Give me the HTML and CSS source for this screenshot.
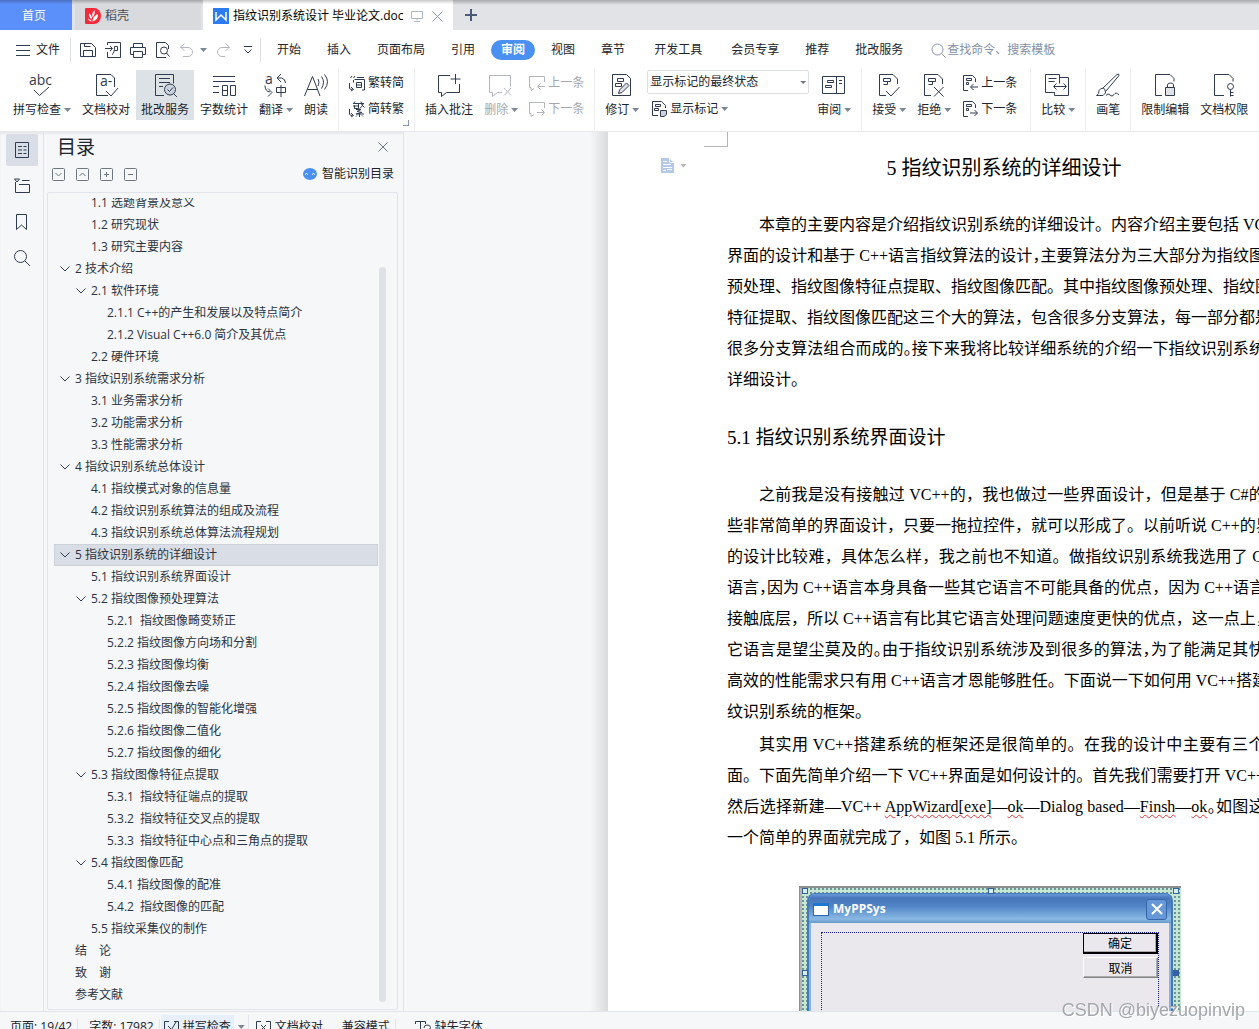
FILE: index.html
```html
<!DOCTYPE html>
<html lang="zh-CN">
<head>
<meta charset="utf-8">
<title>指纹识别系统设计 毕业论文.doc</title>
<link rel="stylesheet" href="styles.css">
</head>
<body>
<svg class="defs" width="0" height="0" aria-hidden="true">
  <symbol id="chev" viewBox="0 0 10 10"><path d="M.5 2.500L5 7l4.500-4.500"/></symbol>
  <symbol id="markdoc" viewBox="0 0 24 24"><path d="M10 22.500H3.500v-21H17l4.500 4.500v5M7.500 5.500h7v3h-7zM7.500 11.500h4v-3"/></symbol>
</svg>

<header class="tabs">
  <a class="tab home" href="#">首页</a>
  <a class="tab shell" href="#">
    <svg width="16" height="16" viewBox="0 0 16 16"><path fill="#f5293a" d="M1 0h8a7 8 0 0 1 0 16H1a1 1 0 0 1-1-1V1a1 1 0 0 1 1-1z"/><path fill="#fff" d="M9.500 2c.8 3-.2 5-1.800 7.600C6.500 7 7.500 4 9.500 2zM4 5c2 1.500 3 3.500 3 6.500C4.500 10 3.500 8 4 5zM13 6c.3 3.500-1.500 6.500-5.500 7.500C7.500 10 10 7 13 6zM3 10.500c1.500.5 3 1.500 3.800 3-2 0-3.300-1-3.800-3z"/></svg>
    <span>稻壳</span></a>
  <a class="tab doc" href="#">
    <svg width="16" height="16" viewBox="0 0 16 16"><path fill="#2d7bf0" d="M0 0h16v16H0z"/><path fill="none" stroke="#fff" stroke-width="1.500" d="M3 4v8l5-5 5 5V4"/></svg>
    <span>指纹识别系统设计 毕业论文.doc</span>
    <svg class="pale" width="12" height="12" viewBox="0 0 12 12"><path d="M.5 1.500h11v7H.5zM6 8.500v2M3 11.500h6"/></svg>
    <svg class="slate" width="11" height="11" viewBox="0 0 11 11"><path d="M.5.500l10 10M10.500.500l-10 10"/></svg>
  </a>
  <button class="newtab" aria-label="新建"><svg width="12" height="12" viewBox="0 0 12 12"><path d="M6 0v12M0 6h12"/></svg></button>
</header>

<nav class="menu">
  <button class="file"><svg width="14" height="11" viewBox="0 0 14 11"><path d="M0 .5h14M0 5.500h14M0 10.500h14"/></svg>文件</button>
  <div class="quick">
    <button aria-label="保存"><svg width="16" height="16" viewBox="0 0 16 16"><path d="M.5 1.500h11l4 4v9h-15zM3.500 14.500v-6h9v6M4.500 1.500v3h6"/></svg></button>
    <button aria-label="输出为PDF"><svg width="16" height="16" viewBox="0 0 16 16"><path d="M2.500 3V.5h13v15h-13V10M0 6.500h7M5 4l2.500 2.500L5 9M7 12.500c2-1 2.500-4 2.500-8h3v4h-3"/></svg></button>
    <button aria-label="打印"><svg width="16" height="16" viewBox="0 0 16 16"><path d="M3.500 5.500v-4h9v4M3.500 12.500h-3v-7h15v7h-3M3.500 9.500h9v6h-9z"/></svg></button>
    <button aria-label="打印预览"><svg width="16" height="16" viewBox="0 0 16 16"><path d="M11 15.500H1.500V.5h9l3 3V7"/><circle cx="9" cy="8.500" r="3.500"/><path d="M11.500 11l3 3.500"/></svg></button>
    <button class="off" aria-label="撤销"><svg width="14" height="14" viewBox="0 0 14 14"><path d="M4.500.5l-4 3.500 4 4M.5 4.500H8a4.500 4.500 0 0 1 0 9H3"/></svg><i class="dd"></i></button>
    <button class="off" aria-label="恢复"><svg width="14" height="14" viewBox="0 0 14 14"><path d="M9.500.5l4 3.500-4 4M13.500 4.500H6a4.500 4.500 0 0 0 0 9h3"/></svg></button>
    <button aria-label="自定义"><svg width="8" height="8" viewBox="0 0 8 8"><path d="M0 .5h8M.5 3.500L4 7l3.500-3.500"/></svg></button>
  </div>
  <div class="menus">
    <a href="#">开始</a><a href="#">插入</a><a href="#">页面布局</a><a href="#">引用</a><a class="on" href="#">审阅</a><a href="#">视图</a><a href="#">章节</a><a class="far" href="#">开发工具</a><a class="far" href="#">会员专享</a><a href="#">推荐</a><a href="#">批改服务</a>
  </div>
  <label class="find"><svg width="15" height="15" viewBox="0 0 15 15"><circle cx="6.500" cy="6.500" r="5.500"/><path d="M10.500 10.500l4 4"/></svg><input type="text" placeholder="查找命令、搜索模板" aria-label="查找命令"></label>
</nav>

<section class="ribbon">
  <div class="group">
    <button class="big"><svg width="24" height="24" viewBox="0 0 24 24"><text x="0" y="12" class="glyph">abc</text><path d="M5 17l5.500 5.500L20 14"/></svg><span>拼写检查<i class="dd"></i></span></button>
    <button class="big"><svg width="24" height="24" viewBox="0 0 24 24"><path d="M14 22.500H2.500v-21H17l3.500 3.500v9M12 18l5 5 7-8"/><text x="6" y="13" class="glyph">a-</text></svg><span>文档校对</span></button>
    <button class="big picked"><svg width="24" height="24" viewBox="0 0 24 24"><path d="M11 22.500H2.500v-21h18v9M6 5.500h11M6 9.500h11M6 13.500h4"/><circle cx="17" cy="16.500" r="5.500" fill="#c9d2dd"/><path d="M14.500 16.500l2 2 3.500-4M20.500 20.500L24 24"/></svg><span>批改服务</span></button>
    <button class="big"><svg width="24" height="24" viewBox="0 0 24 24"><path d="M1 3.500h22M1 8.500h22M1 13.500h6M1 19.500h6M10.500 12.500h5v10h-5zM10.500 17.500h5M18.500 12.500h5v10h-5z"/></svg><span>字数统计</span></button>
    <button class="big"><svg width="24" height="24" viewBox="0 0 24 24"><text x="2" y="11" class="glyph">a</text><path d="M18 1l-4 4 4 4M14 5h4.500q4 1 4 5M2 12.500q0 6 5 6.500M5 15.500l4 4-4 4M13.500 14.500h9v5h-9zM18 12v12"/></svg><span>翻译<i class="dd"></i></span></button>
    <button class="big"><svg width="24" height="24" viewBox="0 0 24 24"><path d="M.5 23L8.500 3.500 16 23M3.500 16.500h10M14 6q2 3 0 7M17.500 3.500q4 5.500 0 12M20.500 1.500q6 7 0 15"/></svg><span>朗读</span></button>
  </div>
  <div class="group corner">
    <div class="stack">
      <button><svg width="16" height="16" viewBox="0 0 16 16"><path d="M3 1L1.500 3M6 1L4.500 3M8 2.500h7M4.500 5v2.500M5.500 4.500h10v10.500H13M.5 8v5q0 1.500 3 1.500M2 12l2.500 2.500L2 16M7.500 7.500h5v5h-5zM7.500 10h5"/></svg>繁转简</button>
      <button><svg width="16" height="16" viewBox="0 0 16 16"><path d="M6 .5L4 3M5 2.500h10M5.500 4.500v3h4v-5M4 5h6M12 .5q0 4 3.500 6M14.500 2q-1 4-4 5.500M7 8.500h5l-4 2 5 1-6 1.500h8M10.500 12v4M7 15.500l1-1M14 15.500l-1-1M.5 8v5q0 1.500 3 1.500M2 12l2.500 2.500L2 16"/></svg>简转繁</button>
    </div>
  </div>
  <div class="group">
    <button class="big"><svg width="24" height="24" viewBox="0 0 24 24"><path d="M13 2.500H1.500v17h3v4l5-4h13V11M18.500 1v10M13.500 6h10"/></svg><span>插入批注</span></button>
    <button class="big off"><svg width="24" height="24" viewBox="0 0 24 24"><path d="M14 19.500H9.500l-5 4v-4h-3v-17h21v11M16 15l7 7.500M23 15l-7 7.500"/></svg><span>删除<i class="dd"></i></span></button>
    <div class="stack off">
      <button disabled><svg width="16" height="16" viewBox="0 0 16 16"><path d="M5 13.500l-3 2v-3H.5v-11h15V7M16 11.500H9M11.500 8.500l-3 3 3 3"/></svg>上一条</button>
      <button disabled><svg width="16" height="16" viewBox="0 0 16 16"><path d="M5 13.500l-3 2v-3H.5v-11h15V7M8 11.500h7M12.500 8.500l3 3-3 3"/></svg>下一条</button>
    </div>
  </div>
  <div class="group">
    <button class="big"><svg width="24" height="24" viewBox="0 0 24 24"><path d="M3.500 1.500h14l4 4v17h-18zM8.500 5.500h6v3h-6zM6.500 10.500h6v3h-6z"/><path fill="#dfe3e8" d="M9.500 20.500l1-3.500 7-7 2.500 2.500-7 7z"/></svg><span>修订<i class="dd"></i></span></button>
    <div class="stack view">
      <span class="pick"><select aria-label="显示标记"><option>显示标记的最终状态</option></select></span>
      <button><svg width="16" height="16" viewBox="0 0 16 16"><path d="M7 14.500H1.500V.5h9l4 4V7M4.500 3.500h5v2h-5zM3.500 7.500h4v2h-4z"/><path fill="#c9d2dd" d="M9.500 9.500h6v4l-2.500 2h-3.500z"/></svg>显示标记<i class="dd"></i></button>
    </div>
    <button class="big"><svg width="24" height="24" viewBox="0 0 24 24"><path d="M1.500 3.500h22v17h-22zM15.500 3.500v17M6.500 7.500h6v2h-6zM4.500 12.500h6v2h-6zM18 7.500h3M18 10.500h3"/></svg><span>审阅<i class="dd"></i></span></button>
  </div>
  <div class="group changes">
    <button class="big"><svg width="24" height="24" viewBox="0 0 24 24"><use href="#markdoc"/><path d="M10 18l5 5 8.500-9"/></svg><span>接受<i class="dd"></i></span></button>
    <button class="big"><svg width="24" height="24" viewBox="0 0 24 24"><use href="#markdoc"/><path d="M13 14l9.500 9.500M22.500 14L13 23.500"/></svg><span>拒绝<i class="dd"></i></span></button>
    <div class="stack">
      <button><svg width="16" height="16" viewBox="0 0 16 16"><path d="M6 15.500H1.500V.5h9l3 3V7M4.500 3.500h5v2h-5zM4.500 9.500h2v-2h-2zM16 12H9M11.500 9l-3 3 3 3"/></svg>上一条</button>
      <button><svg width="16" height="16" viewBox="0 0 16 16"><path d="M6 15.500H1.500V.5h9l3 3V7M4.500 3.500h5v2h-5zM4.500 9.500h2v-2h-2zM8 12h7M12.500 9l3 3-3 3"/></svg>下一条</button>
    </div>
  </div>
  <div class="group">
    <button class="big"><svg width="24" height="24" viewBox="0 0 24 24"><path d="M9.500 19.500h-9v-18h14v9M3.500 5.500h8M3.500 8.500h6M14.500 4.500h9v18h-14v-3M9 13.500h12M11.500 10.500l-3 3 3 3M18.500 10.500l3 3-3 3"/></svg><span>比较<i class="dd"></i></span></button>
  </div>
  <div class="group">
    <button class="big"><svg width="24" height="24" viewBox="0 0 24 24"><path d="M.5 22.500q3-2 2.500-5 3-4 6-1 2 4-2 6zM7 15L21 1.500q2-1.500 2 1L10 18M10 22.500q2-3 4-.5t4-.5 5 .5"/></svg><span>画笔</span></button>
  </div>
  <div class="group">
    <button class="big"><svg width="24" height="24" viewBox="0 0 24 24"><path d="M9 22.500H2.500v-21H17l4 4v3"/><path d="M14.500 15v-3q0-2 3-2t3 2v3"/><path fill="#dfe3e8" d="M12.500 14.500h9v8h-9z"/></svg><span>限制编辑</span></button>
    <button class="big"><svg width="24" height="24" viewBox="0 0 24 24"><path d="M12 22.500H2.500v-21H17l4 4v3"/><circle cx="18.500" cy="13.500" r="3"/><path d="M18.500 16.500v7M18.500 19.500h3M18.500 22.500h3"/></svg><span>文档权限</span></button>
  </div>
</section>

<main class="work">
  <aside class="rail">
    <button class="on" aria-label="目录"><svg width="16" height="16" viewBox="0 0 16 16"><path d="M1.500.5h13v15h-13zM4 4.500h4M9.500 4.500h3M4 8h4M9.500 8h3M4 11.500h4M9.500 11.500h3"/></svg></button>
    <button aria-label="章节"><svg width="16" height="16" viewBox="0 0 16 16"><path d="M.5 1h5L3 4zM8 2.500h7.500M1.500 4v10.500h14v-8H5"/></svg></button>
    <button aria-label="书签"><svg width="16" height="16" viewBox="0 0 16 16"><path d="M2.500.5h10v15l-5-4.500-5 4.500z"/></svg></button>
    <button aria-label="查找"><svg width="16" height="16" viewBox="0 0 16 16"><circle cx="6.500" cy="6.500" r="6"/><path d="M11 11l5 5"/></svg></button>
  </aside>

  <section class="outline">
    <div class="head"><h2>目录</h2><button aria-label="关闭"><svg width="10" height="10" viewBox="0 0 10 10"><path d="M.5.500l9 9M9.500.500l-9 9"/></svg></button></div>
    <div class="tools">
      <button aria-label="展开"><svg width="13" height="13" viewBox="0 0 13 13"><rect x=".5" y=".5" width="12" height="12" rx="1"/><path d="M3.500 5l3 3 3-3"/></svg></button>
      <button aria-label="收起"><svg width="13" height="13" viewBox="0 0 13 13"><rect x=".5" y=".5" width="12" height="12" rx="1"/><path d="M3.500 8l3-3 3 3"/></svg></button>
      <button aria-label="增加"><svg width="13" height="13" viewBox="0 0 13 13"><rect x=".5" y=".5" width="12" height="12" rx="1"/><path d="M6.500 4v5M4 6.500h5"/></svg></button>
      <button aria-label="减少"><svg width="13" height="13" viewBox="0 0 13 13"><rect x=".5" y=".5" width="12" height="12" rx="1"/><path d="M4 6.500h5"/></svg></button>
      <a class="smart" href="#"><svg width="14" height="12" viewBox="0 0 14 12"><ellipse cx="7" cy="6" rx="7" ry="6" fill="#4a90f2" stroke="none"/><path stroke="#fff" d="M2 6.500q1.500-2 3 0M9 6.500q1.500-2 3 0"/></svg>智能识别目录</a>
    </div>
    <div class="box">
      <div class="scroll">
        <ul class="toc">
          <li class="l2"><a href="#">1.1 选题背景及意义</a></li>
          <li class="l2"><a href="#">1.2 研究现状</a></li>
          <li class="l2"><a href="#">1.3 研究主要内容</a></li>
          <li class="l1"><svg><use href="#chev"/></svg><a href="#">2 技术介绍</a></li>
          <li class="l2"><svg><use href="#chev"/></svg><a href="#">2.1 软件环境</a></li>
          <li class="l3"><a href="#">2.1.1 C++的产生和发展以及特点简介</a></li>
          <li class="l3"><a href="#">2.1.2 Visual C++6.0 简介及其优点</a></li>
          <li class="l2"><a href="#">2.2 硬件环境</a></li>
          <li class="l1"><svg><use href="#chev"/></svg><a href="#">3 指纹识别系统需求分析</a></li>
          <li class="l2"><a href="#">3.1 业务需求分析</a></li>
          <li class="l2"><a href="#">3.2 功能需求分析</a></li>
          <li class="l2"><a href="#">3.3 性能需求分析</a></li>
          <li class="l1"><svg><use href="#chev"/></svg><a href="#">4 指纹识别系统总体设计</a></li>
          <li class="l2"><a href="#">4.1 指纹模式对象的信息量</a></li>
          <li class="l2"><a href="#">4.2 指纹识别系统算法的组成及流程</a></li>
          <li class="l2"><a href="#">4.3 指纹识别系统总体算法流程规划</a></li>
          <li class="l1 sel"><svg><use href="#chev"/></svg><a href="#">5 指纹识别系统的详细设计</a></li>
          <li class="l2"><a href="#">5.1 指纹识别系统界面设计</a></li>
          <li class="l2"><svg><use href="#chev"/></svg><a href="#">5.2 指纹图像预处理算法</a></li>
          <li class="l3"><a href="#">5.2.1&nbsp; 指纹图像畸变矫正</a></li>
          <li class="l3"><a href="#">5.2.2 指纹图像方向场和分割</a></li>
          <li class="l3"><a href="#">5.2.3 指纹图像均衡</a></li>
          <li class="l3"><a href="#">5.2.4 指纹图像去噪</a></li>
          <li class="l3"><a href="#">5.2.5 指纹图像的智能化增强</a></li>
          <li class="l3"><a href="#">5.2.6 指纹图像二值化</a></li>
          <li class="l3"><a href="#">5.2.7 指纹图像的细化</a></li>
          <li class="l2"><svg><use href="#chev"/></svg><a href="#">5.3 指纹图像特征点提取</a></li>
          <li class="l3"><a href="#">5.3.1&nbsp; 指纹特征端点的提取</a></li>
          <li class="l3"><a href="#">5.3.2&nbsp; 指纹特征交叉点的提取</a></li>
          <li class="l3"><a href="#">5.3.3&nbsp; 指纹特征中心点和三角点的提取</a></li>
          <li class="l2"><svg><use href="#chev"/></svg><a href="#">5.4 指纹图像匹配</a></li>
          <li class="l3"><a href="#">5.4.1 指纹图像的配准</a></li>
          <li class="l3"><a href="#">5.4.2&nbsp; 指纹图像的匹配</a></li>
          <li class="l2"><a href="#">5.5 指纹采集仪的制作</a></li>
          <li class="l1"><a href="#">结　论</a></li>
          <li class="l1"><a href="#">致　谢</a></li>
          <li class="l1"><a href="#">参考文献</a></li>
        </ul>
      </div>
      <div class="bar"></div>
    </div>
  </section>

  <section class="canvas">
    <div class="edge"></div>
    <article class="page">
      <div class="crop"></div>
      <div class="pastetip"><svg width="13" height="15" viewBox="0 0 13 15"><path fill="#b4c8e8" d="M0 0h8l5 5v10H0z"/><path stroke="#fff" d="M8.500 0v4.500H13M2 3.500h4M2 6.500h8M2 9.500h9M2 12.500h3M6 11.500h5"/></svg><i class="dd"></i></div>
      <div class="text">
        <h1>5 指纹识别系统的详细设计</h1>
        <p>
          <span class="ln in">本章的主要内容是介绍指纹识别系统的详细设计。内容介绍主要包括 VC++</span>
          <span class="ln">界面的设计和基于 C++语言指纹算法的设计<b>，</b>主要算法分为三大部分为指纹图像</span>
          <span class="ln">预处理、指纹图像特征点提取、指纹图像匹配。其中指纹图像预处理、指纹图像</span>
          <span class="ln">特征提取、指纹图像匹配这三个大的算法，包含很多分支算法，每一部分都是由</span>
          <span class="ln">很多分支算法组合而成的<b>。</b>接下来我将比较详细系统的介绍一下指纹识别系统的</span>
          <span class="ln end">详细设计。</span>
        </p>
        <h2>5.1 指纹识别系统界面设计</h2>
        <p>
          <span class="ln in">之前我是没有接触过 VC++的，我也做过一些界面设计，但是基于 C#的一</span>
          <span class="ln">些非常简单的界面设计，只要一拖拉控件，就可以形成了。以前听说 C++的界面</span>
          <span class="ln">的设计比较难，具体怎么样，我之前也不知道。做指纹识别系统我选用了 C++</span>
          <span class="ln">语言<b>，</b>因为 C++语言本身具备一些其它语言不可能具备的优点，因为 C++语言能</span>
          <span class="ln">接触底层，所以 C++语言有比其它语言处理问题速度更快的优点，这一点上，其</span>
          <span class="ln">它语言是望尘莫及的<b>。</b>由于指纹识别系统涉及到很多的算法<b>，</b>为了能满足其快速</span>
          <span class="ln">高效的性能需求只有用 C++语言才恩能够胜任。下面说一下如何用 VC++搭建指</span>
          <span class="ln end">纹识别系统的框架。</span>
        </p>
        <p>
          <span class="ln in">其实用 VC++搭建系统的框架还是很简单的。在我的设计中主要有三个界</span>
          <span class="ln">面。下面先简单介绍一下 VC++界面是如何设计的。首先我们需要打开 VC++，</span>
          <span class="ln">然后选择新建—VC++ <u>AppWizard[exe]</u>—<u>ok</u>—Dialog based—<u>Finsh</u>—<u>ok</u><b>。</b>如图这样</span>
          <span class="ln end">一个简单的界面就完成了，如图 5.1 所示。</span>
        </p>
        <figure>
          <div class="dots">
            <i class="h tl"></i><i class="h tc"></i><i class="h tr"></i><i class="h ml"></i><i class="h mr"></i>
            <div class="win">
              <div class="cap"><span class="ico"></span><span class="name">MyPPSys</span><button aria-label="关闭窗口"><svg width="12" height="12" viewBox="0 0 12 12"><path d="M1 1l10 10M11 1L1 11"/></svg></button></div>
              <div class="client"><div class="grid"><button class="ok">确定</button><button>取消</button></div></div>
            </div>
          </div>
        </figure>
      </div>
    </article>
  </section>
</main>

<footer class="status">
  <div class="in">
    <span class="cell first">页面: 19/42</span>
    <span class="cell">字数: 17982</span>
    <button class="spell"><svg width="15" height="15" viewBox="0 0 15 15"><path d="M5 1.500H.5v12h14v-12H10M4 6l3.500 3.500L12 2"/></svg>拼写检查</button><i class="dd"></i>
    <button class="proof"><svg width="15" height="15" viewBox="0 0 15 15"><path d="M5 1.500H.5v12h14v-12H10M5 5l5 5M10 5l-5 5"/></svg>文档校对</button>
    <span class="mode">兼容模式</span>
    <button class="miss"><svg width="16" height="15" viewBox="0 0 16 15"><path d="M.5 4V1.500h10V4M5.500 1.500v12M9 8q0-3 3-3 3.500 0 3.500 2.500 0 2-3 3v2M12.500 14v1"/></svg>缺失字体</button>
  </div>
</footer>
<div class="mark">CSDN @biyezuopinvip</div>
</body>
</html>
```
FILE: styles.css
```css
* { box-sizing: border-box; }
html, body { height: 100%; }
body {
  margin: 0;
  display: flex;
  flex-direction: column;
  overflow: hidden;
  background: #fff;
  color: #20242c;
  font: 12px/16px "Open Sans", "Noto Sans CJK SC", sans-serif;
}
a { color: inherit; text-decoration: none; }
button { margin: 0; padding: 0; border: 0; background: none; color: inherit; font: inherit; }
svg { flex: none; fill: none; stroke: #2f3b4e; overflow: visible; }
.defs { position: absolute; }
.glyph { fill: #2f3b4e; stroke: none; font-size: 14px; }
.dd {
  flex: none;
  width: 7px;
  height: 4px;
  background: #7c8798;
  clip-path: polygon(0 0, 100% 0, 50% 100%);
}
.off { color: #a3a8b0; }
.off svg { stroke: #b3b7bd; }

/* Window tabs */
.tabs {
  flex: none;
  display: flex;
  height: 30px;
  background: linear-gradient(#a9aaad, #e1e3e7 5px);
}
.tab { display: flex; align-items: center; padding-top: 2px; }
.home { width: 72px; justify-content: center; padding-right: 4px; background: linear-gradient(#4c6fc0, #5b8ff9 4px); color: #fff; }
.shell { width: 126px; margin-left: 3px; padding-left: 10px; gap: 4px; background: linear-gradient(#a2a3a6, #d8dade 4px); color: #4a4f58; }
.shell svg, .doc svg:first-child { stroke: none; }
.doc { width: 250px; margin-left: 2px; padding-left: 10px; gap: 4px; background: linear-gradient(#c8c8c8, #fff 4px); color: #000; white-space: nowrap; }
.doc .pale { stroke: #b0b8c6; margin-left: 3px; }
.doc .slate { stroke: #8b96ac; margin-left: 5px; }
.newtab { width: 36px; display: flex; align-items: center; justify-content: center; }
.newtab svg { stroke: #4b5a78; stroke-width: 2; }

/* Menu row */
.menu { flex: none; display: flex; align-items: center; height: 38px; padding: 2px 0 0 16px; white-space: nowrap; }
.file { display: flex; align-items: center; gap: 6px; padding-right: 10px; }
.quick { display: flex; align-items: center; gap: 9px; height: 24px; padding: 0 8px 0 9px; border-left: 1px solid #dcdfe4; border-right: 1px solid #dcdfe4; }
.quick button { display: flex; align-items: center; gap: 6px; }
.quick button:last-child { padding-left: 5px; }
.menus { display: flex; gap: 6px; padding-left: 6px; }
.menus a { height: 20px; padding: 2px 10px; border-radius: 10px; }
.menus .far { margin-left: 3px; }
.menus .on { background: #4a90f2; color: #fff; font-weight: bold; }
.find { display: flex; align-items: center; gap: 1px; margin-left: 18px; }
.find svg { stroke: #8b96ac; }
.find input { width: 130px; padding: 0; border: 0; outline: 0; font: inherit; }
.find input::placeholder { color: #8590a5; opacity: 1; }

/* Ribbon */
.ribbon {
  flex: none;
  display: flex;
  height: 64px;
  padding-left: 3px;
  overflow: hidden;
  border-bottom: 1px solid #e6e8eb;
  white-space: nowrap;
}
.group { flex: none; display: flex; align-items: flex-start; gap: 1px; height: 62px; padding: 2px 5px 0; border-right: 1px solid #eceef0; }
.group:last-child { border-right: 0; }
.changes { padding-right: 8px; }
.big { display: flex; flex-direction: column; align-items: center; gap: 5px; height: 50px; padding: 3px 5px 0; }
.big > span { display: flex; align-items: center; gap: 3px; }
.big:has(.dd) svg { margin-right: 2px; }
.picked { background: #dde2e7; }
.stack { display: flex; flex-direction: column; padding: 0 5px; }
.stack button { display: flex; align-items: center; gap: 3px; height: 26px; color: inherit; }
.stack.view { padding: 0 2px; }
.stack.view button { padding-left: 4px; }
.corner { position: relative; }
.corner::after { content: ""; position: absolute; right: 5px; bottom: 4px; width: 5px; height: 5px; border: solid #8b96ac; border-width: 0 1px 1px 0; }
.pick { position: relative; height: 26px; }
.pick select { width: 162px; height: 24px; padding: 0 2px; border: 1px solid #dcdfe4; border-radius: 2px; appearance: none; background: #fff; color: inherit; font: inherit; }
.pick::after { content: ""; position: absolute; right: 3px; top: 11px; width: 6px; height: 3px; background: #6b778b; clip-path: polygon(0 0, 100% 0, 50% 100%); }

/* Work area */
.work { flex: 1; min-height: 0; display: flex; background: #f5f7f9; box-shadow: inset 0 2px 2px #e6e8eb; }
.rail { flex: none; width: 44px; padding: 2px 0 0 6px; border-right: 1px solid #e1e4e8; }
.rail button { display: flex; align-items: center; justify-content: center; width: 32px; height: 32px; margin-bottom: 4px; border-radius: 2px; }
.rail .on { background: #d9dee6; }

.outline { flex: none; display: flex; flex-direction: column; width: 360px; padding: 0 5px 1px 3px; border-right: 1px solid #e1e4e8; }
.head { display: flex; align-items: center; justify-content: space-between; height: 30px; padding: 0 10px; }
.head h2 { margin: 0; font-size: 19px; line-height: 24px; font-weight: normal; }
.head svg { stroke: #6b7480; }
.head button { display: flex; }
.tools { display: flex; align-items: center; gap: 11px; height: 24px; padding: 0 4px 0 5px; }
.tools button { display: flex; }
.tools svg { stroke: #6f7680; }
.smart { display: flex; align-items: center; gap: 5px; margin-left: auto; }
.box { flex: 1; min-height: 0; display: flex; margin-top: 6px; border: 1px solid #e1e4e8; border-radius: 2px; padding: 5px 11px 0 6px; }
.scroll { flex: 1; overflow: hidden; }
.toc { margin: -6px 0 0; padding: 0; list-style: none; }
.toc li { display: flex; align-items: center; gap: 5px; height: 22px; padding-left: 21px; color: #2c3340; white-space: pre; }
.toc svg { width: 10px; height: 10px; margin-left: -15px; }
.toc .l2 { padding-left: 37px; }
.toc .l3 { padding-left: 53px; }
.toc .sel { background: #d9dee6; box-shadow: inset 0 0 0 1px #ccd2d8; }
.bar { width: 7px; margin: 69px 0 7px 1px; border-radius: 4px; background: #dee2e6; }

/* Document */
.canvas { flex: 1; min-width: 0; display: flex; overflow: hidden; }
.edge { flex: none; width: 204px; background: linear-gradient(to left, #d9dbdd, #f5f7f9 18px); }
.page { flex: 1 0 auto; position: relative; padding: 0 119px; background: #fff; color: #000; font: 16px/31px "Liberation Serif", "Noto Sans CJK SC", serif; }
.crop { position: absolute; left: 96px; top: 0; width: 24px; height: 15px; border: solid #b5b5b5; border-width: 0 1px 1px 0; }
.pastetip { position: absolute; left: 53px; top: 26px; display: flex; align-items: center; gap: 6px; }
.pastetip svg { stroke: none; }
.pastetip .dd { background: #b5b5b5; }
.text { width: 554px; }
.text h1 { margin: 0; padding: 19px 0 24px; font-size: 20px; line-height: 34px; font-weight: normal; text-align: center; }
.text h2 { margin: 0; padding: 26px 0 24px; font-size: 19px; line-height: 34px; font-weight: normal; }
.text p { margin: 0; }
.text p + p { margin-top: 2px; }
.ln { display: block; height: 31px; white-space: nowrap; text-align: justify; text-align-last: justify; }
.ln.in { padding-left: 32px; }
.ln.end { text-align-last: left; }
.ln b { font-weight: normal; font-feature-settings: "halt"; }
.ln u { text-decoration: underline wavy #e0393e 1px; text-underline-offset: 2px; }

/* Dialog figure */
figure { width: 382px; height: 200px; margin: 33px 0 0 72px; padding: 3px 0 0 4px; border: solid #8c8f8f; border-width: 2px 0 0 1px; background: #b4b4b4; }
.dots { position: relative; height: 200px; padding: 5px 8px 0 5px; background: radial-gradient(circle at 1px 1px, #6d9496 1px, transparent 1px) 0 0 / 4px 4px #c6e7d3; margin: -3px 0 0 -2px; }
.win { height: 195px; padding: 0 2px; border: solid #4478bd; border-width: 1px 2px 0; border-radius: 8px 8px 0 0; background: #86b4e5; overflow: hidden; }
.cap { display: flex; align-items: center; height: 29px; margin: 0 -2px; padding: 1px 4px 0; gap: 4px; background: linear-gradient(#6a9bdb, #4a76bb 4px, #4f83c6 12px, #8ab9e3 25px, #6699cb); }
.ico { width: 16px; height: 13px; border: 1px solid #2c68ad; border-top: 3px solid #1c77d0; background: #fff; }
.name { flex: 1; color: #fff; font: bold 12px/16px "Open Sans", sans-serif; }
.cap button { display: flex; align-items: center; justify-content: center; width: 21px; height: 21px; border: 1px solid #3467aa; border-radius: 3px; background: #6698d8; }
.cap svg { stroke: #fff; stroke-width: 2; }
.client { height: 170px; padding: 9px 10px 0; background: #eae8ed; }
.grid { height: 160px; display: flex; flex-direction: column; align-items: flex-end; gap: 3px; border: 1px dotted #1a1a9c; }
.grid button { width: 75px; height: 21px; border: 1px solid; border-color: #fff #858585 #858585 #fff; box-shadow: inset -1px -1px #aaa; font: 12px/18px "Noto Sans CJK SC", sans-serif; }
.grid .ok { border: 2px solid #000; border-width: 1px 2px 2px 1px; }
.h { position: absolute; width: 6px; height: 6px; border: 1px solid #356298; background: #d7eef0; }
.tl { left: 0; top: 0; }
.tc { left: 186px; top: 0; }
.tr { right: 2px; top: 0; }
.ml { left: 0; top: 82px; }
.mr { right: 2px; top: 82px; background: #3560a8; }

/* Status bar */
.status { flex: none; height: 18px; overflow: hidden; border-top: 1px solid #e1e4e8; background: #f5f7f9; }
.status .in { display: flex; align-items: center; height: 30px; padding-left: 10px; white-space: nowrap; }
.status button { display: flex; align-items: center; gap: 4px; height: 24px; }
.cell { padding-right: 5px; margin-right: 9px; border-right: 1px solid #e1e4e8; }
.cell.first { margin-right: 11px; }
.cell + .spell { margin-left: -8px; }
.spell { padding: 0 3px; margin-right: 4px; background: #e7effb; }
.proof { margin-left: 3px; padding-left: 7px; border-left: 1px solid #e1e4e8; }
.mode { margin-left: 19px; padding-right: 5px; border-right: 1px solid #e1e4e8; }
.miss { margin-left: 19px; }

.mark { position: fixed; right: 14px; bottom: 8px; color: #a3a6aa; font: 18px/22px "Liberation Sans", sans-serif; text-shadow: 1px 1px 0 #fff; }
```
